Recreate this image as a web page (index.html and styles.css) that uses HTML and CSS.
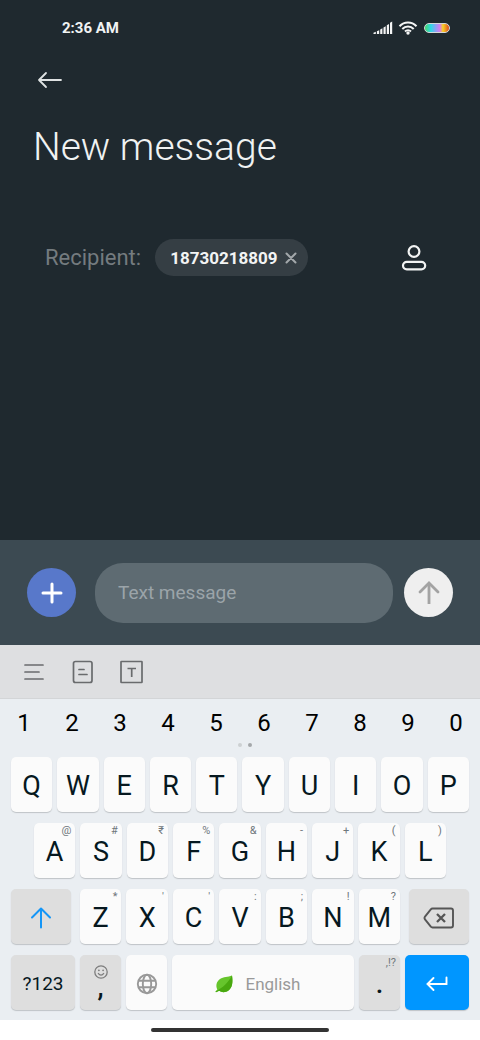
FILE: index.html
```html
<!DOCTYPE html>
<html lang="en">
<head>
<meta charset="utf-8">
<meta name="viewport" content="width=device-width, initial-scale=1">
<title>New message</title>
<link rel="stylesheet" href="styles.css">
</head>
<body>
<div class="screen">
  <header class="status-bar">
    <time class="clock">2:36 AM</time>
    <div class="status-icons">
      <svg width="20" height="14" viewBox="0 0 20 14" fill="#f4f5f5"><path d="M.5 11.800L2.800 10.800V13H.5zM3.900 10.300L6.200 9.200V13H3.900zM7.200 8.500L9.400 7.300V13H7.200zM10.500 6.500L12.700 5.200V13H10.500zM13.800 4.200L16 3V13H13.800zM17 1.800L19.200 .6V13H17z"/></svg>
      <svg width="20" height="14" viewBox="0 0 20 14" fill="none" stroke="#f4f5f5" stroke-width="2"><path d="M1.500 5.200C6.300 .2 13.700 .2 18.500 5.200"/><path d="M4.300 8C7.500 4.700 12.500 4.700 15.700 8"/><path d="M7 10.500C8.700 8.800 11.300 8.800 13 10.500"/><circle cx="10" cy="12" r="1.700" fill="#f4f5f5" stroke="none"/></svg>
      <span class="battery"></span>
    </div>
  </header>

  <main class="compose">
    <button class="icon-button back" aria-label="Back">
      <svg width="26" height="18" viewBox="0 0 26 18" fill="none" stroke="#dfe2e3" stroke-width="1.800" stroke-linecap="round" stroke-linejoin="round"><path d="M24 9H2M9 2L2 9L9 16"/></svg>
    </button>
    <h1 class="title">New message</h1>
    <div class="recipient">
      <span class="recipient-label">Recipient:</span>
      <span class="chip">18730218809
        <button class="icon-button" aria-label="Remove recipient">
          <svg width="12" height="12" viewBox="0 0 12 12" stroke="#a3a8ab" stroke-width="2" stroke-linecap="round"><path d="M1.500 1.500L10.500 10.500M10.500 1.500L1.500 10.500"/></svg>
        </button>
      </span>
      <button class="icon-button contacts" aria-label="Contacts">
        <svg width="26" height="26" viewBox="0 0 26 26" fill="none" stroke="#f2f3f3" stroke-width="2.200"><circle cx="13" cy="6.500" r="5.400"/><rect x="2" y="16.800" width="22.200" height="7.600" rx="3.800"/></svg>
      </button>
    </div>
  </main>

  <form class="message-bar">
    <button type="button" class="round add" aria-label="Add attachment">
      <svg width="22" height="22" viewBox="0 0 22 22" stroke="#fff" stroke-width="3" stroke-linecap="round"><path d="M11 2V20M2 11H20"/></svg>
    </button>
    <input class="message-input" type="text" placeholder="Text message" aria-label="Text message">
    <button type="button" class="round send" aria-label="Send">
      <svg width="22" height="24" viewBox="0 0 22 24" fill="none" stroke="#a3a3a3" stroke-width="2.800"><path d="M11 23V2"/><path d="M2 11L11 2L20 11" stroke-linecap="round"/></svg>
    </button>
  </form>

  <section class="keyboard" aria-label="Keyboard">
    <div class="tools">
      <button class="icon-button" aria-label="Menu"><svg width="24" height="24" viewBox="0 0 24 24" stroke="#696b6d" stroke-width="1.700" stroke-linecap="round"><path d="M3 5H21M3 12H17M3 19H21"/></svg></button>
      <button class="icon-button" aria-label="Clipboard"><svg width="24" height="24" viewBox="0 0 24 24" fill="none" stroke="#696b6d" stroke-width="1.700" stroke-linecap="round"><rect x="2.500" y="1.500" width="18.500" height="21" rx="2"/><path d="M8 9.500H13M8 14.500H16"/></svg></button>
      <button class="icon-button" aria-label="Text tools"><svg width="24" height="24" viewBox="0 0 24 24" fill="none" stroke="#696b6d" stroke-width="1.700"><rect x="1" y="1.500" width="21" height="21" rx=".5"/><path d="M7.500 8.500H16M11.700 8.500V17"/></svg></button>
    </div>
    <div class="numbers">
      <button>1</button><button>2</button><button>3</button><button>4</button><button>5</button><button>6</button><button>7</button><button>8</button><button>9</button><button>0</button>
    </div>
    <div class="pager"><i></i><i class="current"></i></div>
    <div class="rows">
      <div class="row">
        <button class="key">Q</button><button class="key">W</button><button class="key">E</button><button class="key">R</button><button class="key">T</button><button class="key">Y</button><button class="key">U</button><button class="key">I</button><button class="key">O</button><button class="key">P</button>
      </div>
      <div class="row home-row">
        <button class="key">A<small>@</small></button><button class="key">S<small>#</small></button><button class="key">D<small>₹</small></button><button class="key">F<small>%</small></button><button class="key">G<small>&amp;</small></button><button class="key">H<small>-</small></button><button class="key">J<small>+</small></button><button class="key">K<small>(</small></button><button class="key">L<small>)</small></button>
      </div>
      <div class="row shift-row">
        <button class="key gray side" aria-label="Shift"><svg width="22" height="22" viewBox="0 0 22 22" fill="none" stroke="#1496f7" stroke-width="2" stroke-linecap="round" stroke-linejoin="round"><path d="M11 20.500V1.500M2 10.500L11 1.500L20 10.500"/></svg></button>
        <div class="row letters">
          <button class="key">Z<small>*</small></button><button class="key">X<small>'</small></button><button class="key">C<small>'</small></button><button class="key">V<small>:</small></button><button class="key">B<small>;</small></button><button class="key">N<small>!</small></button><button class="key">M<small>?</small></button>
        </div>
        <button class="key gray side" aria-label="Backspace"><svg width="32" height="22" viewBox="0 0 32 22" fill="none" stroke="#555" stroke-width="1.900" stroke-linejoin="round"><path d="M9.500 1.500H28Q30 1.500 30 3.500V18.500Q30 20.500 28 20.500H9.500Q8.500 20.500 7.800 19.700L2 12.300Q1 11 2 9.700L7.800 2.300Q8.500 1.500 9.500 1.500Z"/><path d="M14 7L22 15M22 7L14 15" stroke-width="2.300"/></svg></button>
      </div>
      <div class="row">
        <button class="key gray wide">?123</button>
        <button class="key gray narrow comma"><svg width="14" height="14" viewBox="0 0 14 14" fill="none" stroke="#7d7d7d" stroke-width="1.300"><circle cx="7" cy="7" r="6.200"/><path d="M4 8.200Q7 12.200 10 8.200" stroke-width="1.200"/><circle cx="4.900" cy="5.300" r=".9" fill="#7d7d7d" stroke="none"/><circle cx="9.100" cy="5.300" r=".9" fill="#7d7d7d" stroke="none"/></svg><span>,</span></button>
        <button class="key narrow" aria-label="Change language"><svg width="22" height="22" viewBox="0 0 22 22" fill="none" stroke="#999" stroke-width="1.900"><circle cx="11" cy="11" r="9.200"/><ellipse cx="11" cy="11" rx="4.200" ry="9.200"/><path d="M2.500 7.800H19.500M2.500 14.200H19.500"/></svg></button>
        <button class="key space"><svg width="18" height="18" viewBox="0 0 18 18"><path d="M17 .5C18 7 17.500 12.500 13.500 15.500C10.500 17.800 6.500 17.500 4.200 15.800L1 17.200L.5 16.500L2.300 14.500C.5 10.500 1.500 6.500 5 4C8.500 1.500 13 2.500 17 .5Z" fill="#66c52c"/><path d="M17 .5C18 7 17.500 12.500 13.500 15.500C10.500 17.800 6.500 17.500 4.200 15.800L1 17.200L.5 16.500C8 12.500 13 8 17 .5Z" fill="#48a80f"/></svg>English</button>
        <button class="key gray narrow dot">.<small>,!?</small></button>
        <button class="key enter" aria-label="Enter"><svg width="22" height="16" viewBox="0 0 22 16" fill="none" stroke="#fff" stroke-width="1.900" stroke-linecap="round"><path d="M20.500 1.500V8H1.500M7.500 2L1.500 8L7.500 14"/></svg></button>
      </div>
    </div>
  </section>
  <footer class="nav-bar"><span class="home-handle"></span></footer>
</div>
</body>
</html>
```

FILE: styles.css
```css
* {
  box-sizing: border-box;
}

body {
  margin: 0;
  background: #1f292f;
  font-family: Roboto, "Liberation Sans", sans-serif;
}

button,
input {
  margin: 0;
  padding: 0;
  border: 0;
  background: none;
  color: inherit;
  font: inherit;
}

svg {
  display: block;
  flex: none;
}

.screen {
  display: flex;
  flex-direction: column;
  min-height: 100vh;
}

.status-bar {
  display: flex;
  align-items: center;
  justify-content: space-between;
  height: 56px;
  padding: 0 30px 0 62px;
  color: #f1f3f3;
}

.clock {
  font-size: 15px;
  font-weight: 700;
}

.status-icons {
  display: flex;
  align-items: center;
  gap: 5px;
}

.battery {
  width: 26px;
  height: 10px;
  margin-left: 1px;
  border: 1px solid #d5d9da;
  border-radius: 5px;
  background: linear-gradient(90deg, #45d66a, #2fd8e8 25%, #8fa0f5 45%, #d77df0 62%, #f8d220 75%, #f09a20 85%, #d84a20);
}

.compose {
  flex: 1;
  padding: 15px 53px 24px 33px;
}

.icon-button {
  display: flex;
  align-items: center;
  justify-content: center;
}

.back {
  padding: 0 4px;
}

.title {
  margin: 34px 0 0;
  color: #f0f2f2;
  font-size: 39px;
  font-weight: 300;
  line-height: 48px;
}

.recipient {
  display: flex;
  align-items: center;
  margin-top: 68px;
  padding-left: 12px;
}

.recipient-label {
  color: #747b7f;
  font-size: 22px;
}

.chip {
  display: flex;
  align-items: center;
  gap: 8px;
  height: 37px;
  margin-left: 14px;
  padding: 0 11px 0 15px;
  border-radius: 19px;
  background: #353e44;
  color: #f3f4f4;
  font-size: 17px;
  font-weight: 700;
}

.contacts {
  margin-left: auto;
}

.message-bar {
  display: flex;
  align-items: center;
  height: 105px;
  padding: 0 27px;
  background: #3c4a52;
}

.round {
  display: flex;
  flex: none;
  align-items: center;
  justify-content: center;
  width: 49px;
  height: 49px;
  border-radius: 50%;
}

.add {
  background: #5878ca;
}

.send {
  background: #efefef;
}

.message-input {
  flex: 1;
  min-width: 0;
  height: 60px;
  margin: 0 11px 0 19px;
  padding: 0 23px;
  border-radius: 28px;
  background: #5e6b72;
  color: #fff;
  font-size: 19px;
}

.message-input::placeholder {
  color: #9ba4a9;
  opacity: 1;
}

.keyboard {
  background: #eaeef2;
  color: #06181f;
}

.tools {
  display: flex;
  align-items: center;
  gap: 25px;
  height: 54px;
  padding: 0 22px;
  border-bottom: 1px solid #d3d5d7;
  background: #dedfe1;
}

.numbers {
  display: grid;
  grid-template-columns: repeat(10, 1fr);
  height: 44px;
  padding-top: 3px;
  color: #000;
  font-size: 24px;
}

.pager {
  display: flex;
  justify-content: center;
  gap: 6px;
  padding-left: 10px;
}

.pager i {
  width: 4px;
  height: 4px;
  border-radius: 50%;
  background: #cdd0d3;
}

.pager .current {
  background: #a4a7aa;
}

.rows {
  display: flex;
  flex-direction: column;
  gap: 11px;
  padding: 10px 11px;
}

.row {
  display: flex;
  gap: 5px;
}

.home-row {
  padding: 0 23px;
}

.shift-row {
  gap: 9px;
}

.letters {
  flex: 1;
}

.key {
  position: relative;
  display: flex;
  flex: 1 1 0;
  align-items: center;
  justify-content: center;
  min-width: 0;
  height: 55px;
  padding-top: 2px;
  border-radius: 5px;
  background: #fbfbfb;
  box-shadow: 0 1px 1px #bfc3c7;
  font-size: 27px;
  line-height: 28px;
}

.key small {
  position: absolute;
  top: 2px;
  right: 4px;
  color: #6f777b;
  font-size: 11px;
  line-height: 12px;
}

.gray {
  background: #dedede;
}

.side {
  flex: 0 0 60px;
}

.narrow {
  flex: 0 0 41px;
}

.wide,
.enter {
  flex: 0 0 64px;
}

.wide {
  font-size: 19px;
}

.comma {
  flex-direction: column;
  padding: 0 0 6px;
  font-weight: 500;
  line-height: 16px;
}

.space {
  gap: 12px;
  padding-right: 10px;
  color: #999;
  font-size: 17px;
}

.dot {
  font-weight: 500;
}

.dot small {
  font-weight: 400;
}

.enter {
  background: #0096ff;
}

.nav-bar {
  display: flex;
  align-items: center;
  justify-content: center;
  height: 20px;
  background: #fff;
}

.home-handle {
  width: 37%;
  height: 4px;
  border-radius: 2px;
  background: #333;
}
```
